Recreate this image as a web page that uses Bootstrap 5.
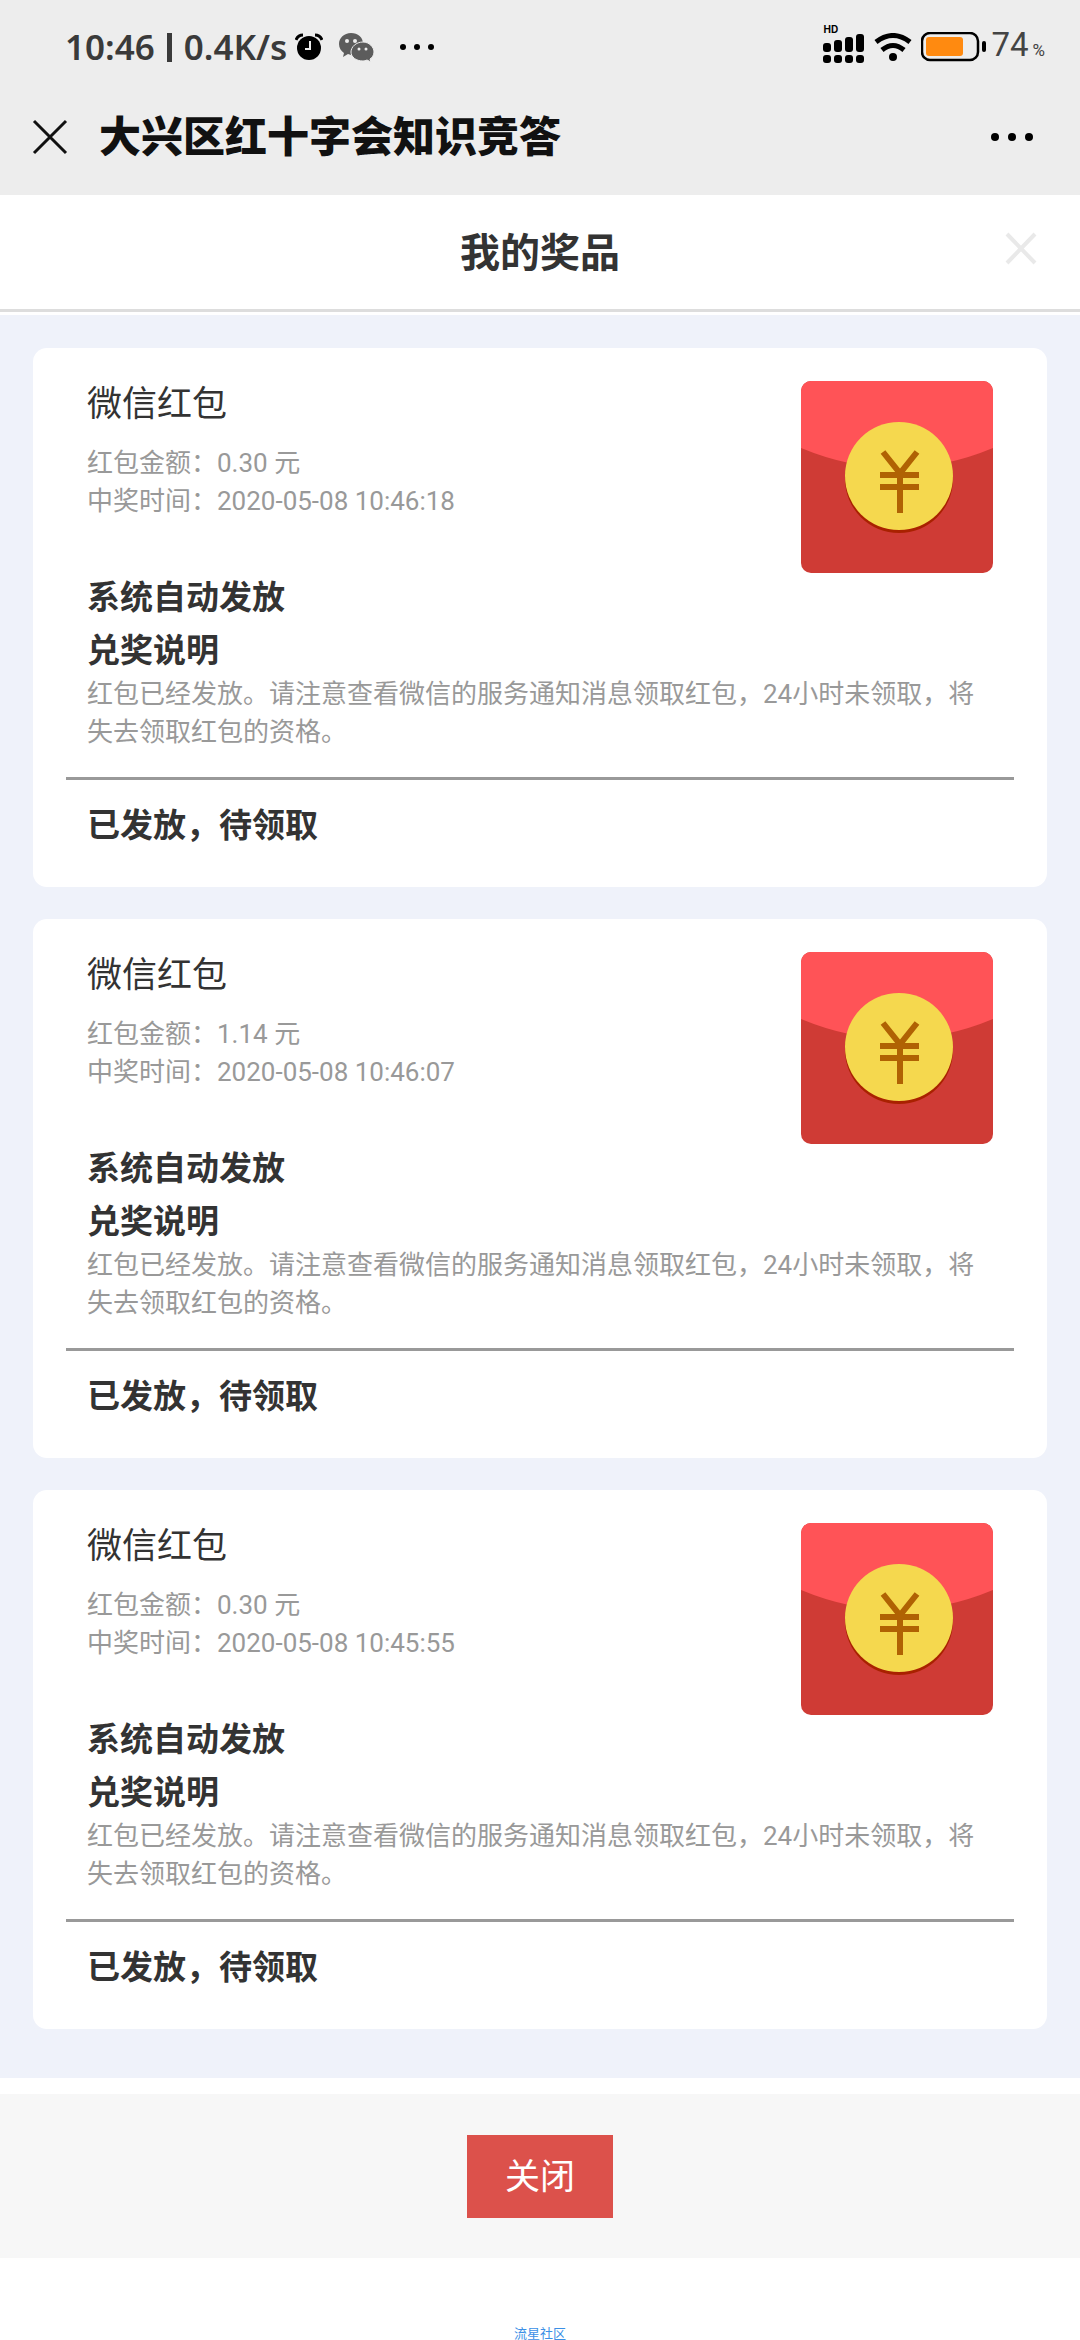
<!DOCTYPE html>
<html lang="zh-CN">
<head>
<meta charset="utf-8">
<meta name="viewport" content="width=device-width, initial-scale=1">
<title>大兴区红十字会知识竞答</title>
<link href="https://cdn.jsdelivr.net/npm/bootstrap@5.3.0/dist/css/bootstrap.min.css" rel="stylesheet">
<style>
  body { font-family: Roboto, "Noto Sans CJK SC", sans-serif; color: #333; background: #fff; }
  svg { display: block; flex: none; }
  .app-top { background: #ededed; color: #111; }
  .status-bar { padding: 16px 35px 0 65px; height: 78px; }
  .status-text { gap: 12px; }
  .status-net { font: 600 35px/40px "Noto Sans", sans-serif; color: #3a3a3a; }
  .status-sep { width: 5px; height: 29px; background: #3a3a3a; }
  .status-cell { padding-bottom: 6px; }
  .status-hd { font: 700 10px/8px Inter, sans-serif; color: #000; }
  .status-level { font-size: 33px; line-height: 34px; color: #444; gap: 4px; }
  .status-pct { font-size: 17px; }
  .icon-btn { background: none; border: 0; padding: 0; }
  .title-bar { padding: 0 46px 0 32px; height: 117px; gap: 31px; }
  .title-bar h1 { font-size: 42px; line-height: 60px; font-weight: 900; padding-top: 2px; }
  .sheet-head { display: grid; grid-template-columns: 1fr auto 1fr; padding: 27px 43px 25px; border-bottom: 3px solid #ddd; margin-bottom: 3px; }
  .sheet-head h2 { font-size: 40px; line-height: 60px; font-weight: 700; grid-column: 2; padding-top: 2px; }
  .prizes { background: #eff2fa; padding: 33px 33px 49px; gap: 32px; }
  .prize { border: 0; border-radius: 14px; padding: 33px 0 38px; color: #333; }
  .prize-part { padding: 0 54px; }
  .prize h3 { font-size: 35px; line-height: 46px; font-weight: 400; margin: 1px 0 16px; }
  .prize-note { font-size: 26px; line-height: 38px; color: #999; margin: 0; }
  .prize-strong { font-size: 33px; line-height: 46px; font-weight: 700; margin: 0; }
  .prize-rules { padding-top: 2px; }
  .prize-strong + .prize-strong { margin-top: 7px; }
  .prize-strong + .prize-note { margin-top: 1px; }
  .prize hr { margin: 26px 33px 23px; border-top: 3px solid #999; opacity: 1; }
  .sheet-foot { background: #f7f7f7; margin-top: 16px; padding: 41px 0 40px; }
  .btn-shut { --bs-btn-color: #fff; --bs-btn-bg: #dc514b; --bs-btn-border-color: #dc514b; --bs-btn-hover-color: #fff; --bs-btn-hover-bg: #c9443e; --bs-btn-border-radius: 0; font-size: 35px; line-height: 53px; padding: 15px 37px 13px; }
  .credit { padding-top: 69px; font-size: 13px; line-height: 13px; }
  .credit a { color: #3b8fe6; text-decoration: none; display: block; }
</style>
</head>
<body>
<svg width="0" height="0" class="position-absolute" aria-hidden="true">
  <defs>
    <clipPath id="envClip"><rect width="192" height="192" rx="10"/></clipPath>
    <symbol id="envelope" viewBox="0 0 192 192">
      <g clip-path="url(#envClip)">
        <rect width="192" height="192" fill="#cf3b35"/>
        <path d="M0 0H192V67Q96 107 0 67Z" fill="#ff5357"/>
      </g>
      <circle cx="98" cy="98" r="54" fill="#a92100"/>
      <circle cx="98" cy="95" r="54" fill="#f5d84e"/>
      <path d="M82 71L98 91H100L116 71M99 89V132M79 94H118M79 106H118" fill="none" stroke="#b06203" stroke-width="6"/>
    </symbol>
  </defs>
</svg>

<header class="app-top">
  <div class="status-bar d-flex justify-content-between align-items-center">
    <div class="d-flex align-items-center">
      <div class="status-text d-flex align-items-center">
        <span class="status-net">10:46</span>
        <span class="status-sep"></span>
        <span class="status-net">0.4K/s</span>
      </div>
      <svg class="ms-2 me-3" width="28" height="28" viewBox="0 0 28 28">
        <path d="M1 7Q3 2 8 2M20 2Q25 2 27 7" fill="none" stroke="#000" stroke-width="3"/>
        <circle cx="14" cy="15" r="12" fill="#000"/>
        <path d="M15 8V16H10" fill="none" stroke="#ededed" stroke-width="2"/>
      </svg>
      <svg width="36" height="30" viewBox="0 0 36 30">
        <path d="M12 1C5 1 0 6 0 12C0 16 2 19 5 21L4 25L9 22Q11 23 14 23C20 23 24 18 24 12C24 5 19 1 12 1Z" fill="#5c5c5c"/>
        <circle cx="8" cy="9" r="2" fill="#ededed"/><circle cx="16" cy="9" r="2" fill="#ededed"/>
        <path d="M24 10C17 10 12 15 12 20C12 25 17 29 24 29Q26 29 28 28L32 30L31 27C33 26 35 23 35 20C35 15 30 10 24 10Z" fill="#5c5c5c" stroke="#ededed"/>
        <circle cx="20" cy="17" r="1.500" fill="#ededed"/><circle cx="27" cy="17" r="1.500" fill="#ededed"/>
      </svg>
      <svg class="ms-4" width="36" height="8" viewBox="0 0 36 8"><circle cx="4" cy="4" r="3"/><circle cx="18" cy="4" r="3"/><circle cx="32" cy="4" r="3"/></svg>
    </div>
    <div class="d-flex align-items-center">
      <div class="status-cell d-flex flex-column">
        <span class="status-hd">HD</span>
        <svg width="42" height="30" viewBox="0 0 42 30">
          <rect y="10" width="8" height="9" rx="3"/><rect x="11" y="7" width="8" height="12" rx="3"/><rect x="22" y="4" width="8" height="15" rx="3"/><rect x="33" y="1" width="8" height="18" rx="3"/>
          <rect y="22" width="8" height="8" rx="3"/><rect x="11" y="22" width="8" height="8" rx="3"/><rect x="22" y="22" width="8" height="8" rx="3"/><rect x="33" y="22" width="8" height="8" rx="3"/>
        </svg>
      </div>
      <svg class="mx-2" width="40" height="28" viewBox="0 0 40 28">
        <path d="M3 9Q20 -4 37 9M9 17Q20 8 31 17" fill="none" stroke="#000" stroke-width="5"/>
        <circle cx="20" cy="24" r="4"/>
      </svg>
      <svg class="me-1" width="66" height="30" viewBox="0 0 66 30">
        <rect x="1" y="1" width="56" height="27" rx="8" fill="none" stroke="#000" stroke-width="2.500"/>
        <rect x="5" y="5" width="37" height="19" rx="3" fill="#ff8a10"/>
        <rect x="61" y="9" width="4" height="11" rx="2"/>
      </svg>
      <div class="status-level d-flex align-items-baseline"><span>74</span><span class="status-pct">%</span></div>
    </div>
  </div>
  <div class="title-bar d-flex align-items-center">
    <button class="icon-btn" type="button" aria-label="返回">
      <svg width="36" height="36" viewBox="0 0 36 36"><path d="M2 2L34 34M34 2L2 34" stroke="#111" stroke-width="3"/></svg>
    </button>
    <h1 class="m-0 flex-grow-1">大兴区红十字会知识竞答</h1>
    <button class="icon-btn" type="button" aria-label="更多">
      <svg width="44" height="10" viewBox="0 0 44 10"><circle cx="5" cy="5" r="4"/><circle cx="22" cy="5" r="4"/><circle cx="39" cy="5" r="4"/></svg>
    </button>
  </div>
</header>

<main>
  <div class="sheet-head">
    <h2 class="m-0">我的奖品</h2>
    <button class="icon-btn ms-auto align-self-start" type="button" aria-label="关闭窗口">
      <svg width="32" height="54" viewBox="0 0 32 54"><path d="M2 12L30 41M30 12L2 41" stroke="#e9e9e9" stroke-width="4"/></svg>
    </button>
  </div>

  <section class="prizes d-flex flex-column">
    <article class="card prize">
      <div class="prize-part d-flex justify-content-between">
        <div>
          <h3>微信红包</h3>
          <p class="prize-note">红包金额：0.30 元</p>
          <p class="prize-note">中奖时间：2020-05-08 10:46:18</p>
        </div>
        <svg width="192" height="192" role="img" aria-label="红包"><use href="#envelope"/></svg>
      </div>
      <div class="prize-part prize-rules">
        <p class="prize-strong">系统自动发放</p>
        <p class="prize-strong">兑奖说明</p>
        <p class="prize-note">红包已经发放。请注意查看微信的服务通知消息领取红包，24小时未领取，将失去领取红包的资格。</p>
      </div>
      <hr>
      <p class="prize-part prize-strong">已发放，待领取</p>
    </article>

    <article class="card prize">
      <div class="prize-part d-flex justify-content-between">
        <div>
          <h3>微信红包</h3>
          <p class="prize-note">红包金额：1.14 元</p>
          <p class="prize-note">中奖时间：2020-05-08 10:46:07</p>
        </div>
        <svg width="192" height="192" role="img" aria-label="红包"><use href="#envelope"/></svg>
      </div>
      <div class="prize-part prize-rules">
        <p class="prize-strong">系统自动发放</p>
        <p class="prize-strong">兑奖说明</p>
        <p class="prize-note">红包已经发放。请注意查看微信的服务通知消息领取红包，24小时未领取，将失去领取红包的资格。</p>
      </div>
      <hr>
      <p class="prize-part prize-strong">已发放，待领取</p>
    </article>

    <article class="card prize">
      <div class="prize-part d-flex justify-content-between">
        <div>
          <h3>微信红包</h3>
          <p class="prize-note">红包金额：0.30 元</p>
          <p class="prize-note">中奖时间：2020-05-08 10:45:55</p>
        </div>
        <svg width="192" height="192" role="img" aria-label="红包"><use href="#envelope"/></svg>
      </div>
      <div class="prize-part prize-rules">
        <p class="prize-strong">系统自动发放</p>
        <p class="prize-strong">兑奖说明</p>
        <p class="prize-note">红包已经发放。请注意查看微信的服务通知消息领取红包，24小时未领取，将失去领取红包的资格。</p>
      </div>
      <hr>
      <p class="prize-part prize-strong">已发放，待领取</p>
    </article>
  </section>

  <div class="sheet-foot d-flex justify-content-center">
    <button class="btn btn-shut" type="button">关闭</button>
  </div>
</main>

<footer class="credit d-flex justify-content-center"><a href="#">流星社区</a></footer>
<script src="https://cdn.jsdelivr.net/npm/bootstrap@5.3.0/dist/js/bootstrap.bundle.min.js"></script>
</body>
</html>
